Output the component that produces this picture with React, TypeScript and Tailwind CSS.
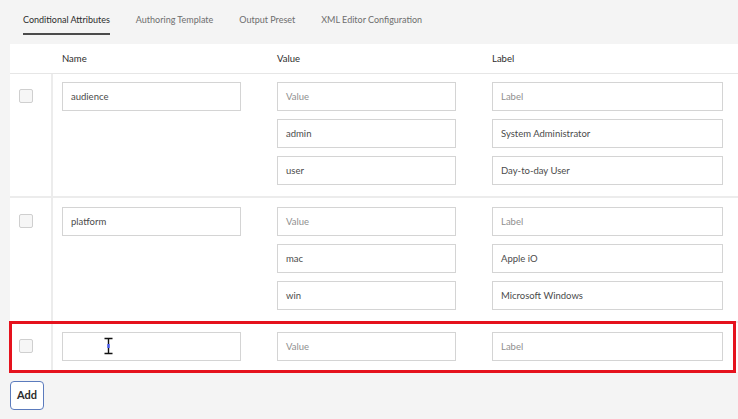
import React from "react"

interface AttrRow {
	name: string
	values: { value: string; label: string }[]
}

const rows: AttrRow[] = [
	{
		name: "audience",
		values: [
			{ value: "", label: "" },
			{ value: "admin", label: "System Administrator" },
			{ value: "user", label: "Day-to-day User" },
		],
	},
	{
		name: "platform",
		values: [
			{ value: "", label: "" },
			{ value: "mac", label: "Apple iO" },
			{ value: "win", label: "Microsoft Windows" },
		],
	},
]

const tabs = ["Conditional Attributes", "Authoring Template", "Output Preset", "XML Editor Configuration"]

const Field = ({ text, placeholder, width }: { text: string; placeholder: string; width: string }) => (
	<div
		className={`${width} h-[29px] flex items-center px-[8px] pt-[1px] border border-[#d4d4d4] bg-white text-[9.5px] ${
			text ? "text-[#4b4b4b]" : "text-[#8f8f8f]"
		}`}>
		{text || placeholder}
	</div>
)

const Checkbox = () => <div className="w-[14px] h-[14px] border border-[#cfcfcf] bg-[#f6f6f6] rounded-[2px]" />

const IBeam = () => (
	<svg width="11" height="18" viewBox="0 0 11 18" className="absolute left-[103px] top-[337px]">
		<path
			d="M1 1h9M1 17h9M5.5 1v16M3 8.5h5"
			stroke="#fff"
			strokeWidth="3"
			strokeLinecap="square"
		/>
		<path d="M1.5 1.5h8M1.5 16.5h8M5.5 1.5v15" stroke="#111" strokeWidth="1.4" />
		<rect x="4.3" y="7" width="2.4" height="4" fill="#4a5cf0" />
	</svg>
)

export default function App() {
	return (
		<div
			className="relative w-[738px] h-[419px] overflow-hidden bg-[#f4f4f4]"
			style={{ fontFamily: "Lato, 'Noto Sans', sans-serif" }}>
			{/* tabs */}
			<div className="flex gap-[26px] pl-[23px] h-[35px]">
				{tabs.map((t, i) => (
					<div
						key={t}
						className={`flex items-center text-[9px] h-full pt-[6px] ${
							i === 0 ? "text-[#2c2c2c] border-b-2 border-[#4b4b4b]" : "text-[#6e6e6e] border-b-2 border-transparent"
						}`}>
						{t}
					</div>
				))}
			</div>

			{/* table */}
			<div className="ml-[10px] mt-[9px] bg-white">
				<div className="flex h-[30px] items-center pt-[1px] border-b border-[#e6e6e6] text-[9.5px] text-[#2c2c2c]">
					<div className="w-[52px]" />
					<div className="w-[215px]">Name</div>
					<div className="w-[215px]">Value</div>
					<div>Label</div>
				</div>

				{rows.map((row, ri) => (
					<div key={row.name} className={`flex ${ri > 0 ? "border-t-2 border-[#ececec]" : ""}`}>
						<div className={`w-[43px] border-r-2 border-[#ececec] pl-[9px] ${ri === 0 ? "pt-[15px]" : "pt-[16px]"}`}>
							<Checkbox />
						</div>
						<div className={`flex pl-[9px] pb-[11px] ${ri === 0 ? "pt-[8px]" : "pt-[9px]"}`}>
							<div className="w-[215px]">
								<Field text={row.name} placeholder="" width="w-[179px]" />
							</div>
							<div className="flex flex-col gap-[8px] w-[215px]">
								{row.values.map((v, vi) => (
									<Field key={vi} text={v.value} placeholder="Value" width="w-[179px]" />
								))}
							</div>
							<div className="flex flex-col gap-[8px]">
								{row.values.map((v, vi) => (
									<Field key={vi} text={v.label} placeholder="Label" width="w-[231px]" />
								))}
							</div>
						</div>
					</div>
				))}

				{/* new empty row */}
				<div className="flex border-t-2 border-[#ececec]">
					<div className="w-[43px] border-r-2 border-[#ececec] pl-[9px] pt-[16px]">
						<Checkbox />
					</div>
					<div className="flex pl-[9px] pt-[9px] pb-[11px]">
						<div className="w-[215px]">
							<Field text="" placeholder="" width="w-[179px]" />
						</div>
						<div className="w-[215px]">
							<Field text="" placeholder="Value" width="w-[179px]" />
						</div>
						<Field text="" placeholder="Label" width="w-[231px]" />
					</div>
				</div>
			</div>

			<div className="pl-[10px] pt-[9px]">
				<button className="w-[34px] h-[29px] rounded-[4px] border border-[#5b7bbd] bg-white text-[11px] font-bold text-[#2c2c2c]">
					Add
				</button>
			</div>

			{/* highlight annotation */}
			<div className="absolute left-[9px] top-[321px] w-[727px] h-[52px] border-[3px] border-[#e5121d] pointer-events-none" />
			<IBeam />
		</div>
	)
}
